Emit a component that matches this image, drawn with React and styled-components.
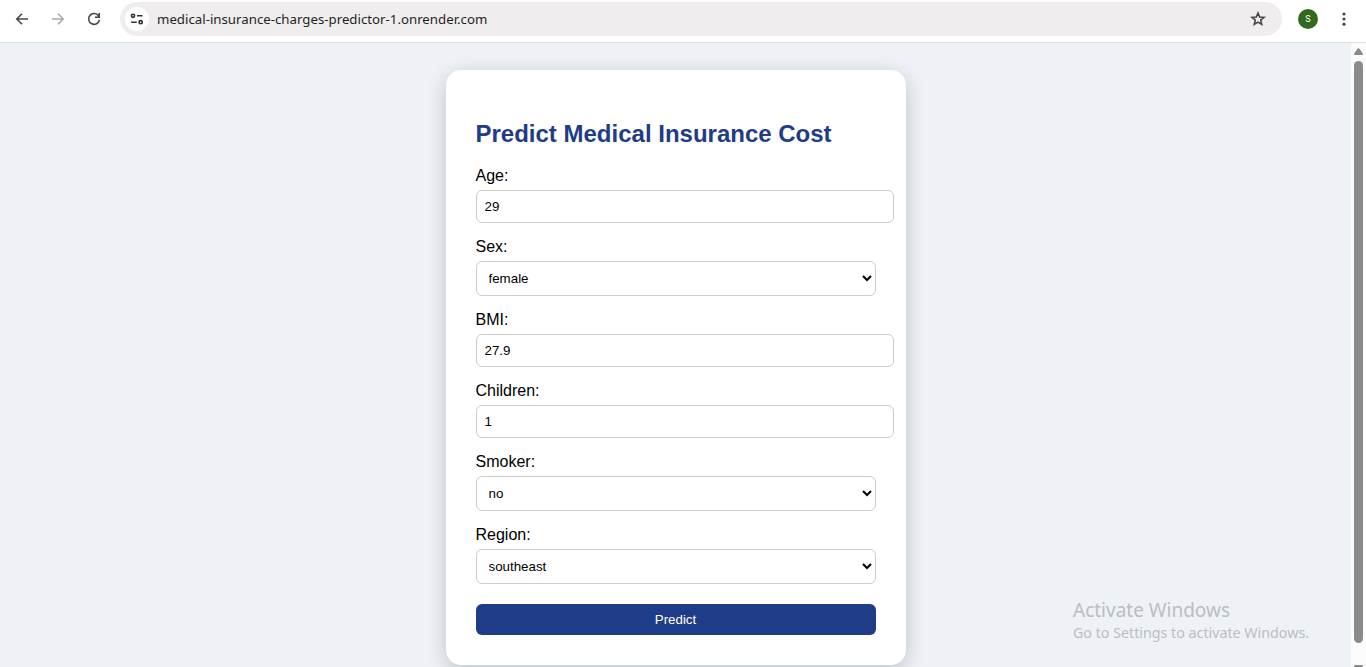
import React from 'react';
import styled, { createGlobalStyle } from 'styled-components';

const GlobalStyle = createGlobalStyle`
  body { margin: 0; background: #eef2f7; overflow: hidden; }
  *, *::before, *::after { box-sizing: border-box; }
`;

const Window = styled.div`
  position: relative;
  display: flex;
  flex-direction: column;
  width: 1366px;
  height: 667px;
  overflow: hidden;
  background: #fff;
  font-family: Arial, 'Liberation Sans', sans-serif;
`;

const Toolbar = styled.header`
  display: flex;
  flex: none;
  align-items: flex-start;
  height: 43px;
  padding: 2px 13px 0 13px;
  border-bottom: 1px solid #dedfe1;
  background: #fff;
`;

const NavButtons = styled.nav`
  display: flex;
  align-items: center;
  gap: 18px;
  width: 107px;
  height: 34px;
`;

const Icon = styled.svg`
  display: block;
  flex: none;
  width: 18px;
  height: 18px;
  fill: none;
  stroke: ${(p) => p.$color || '#474747'};
  stroke-width: 1.6;
`;

const AddressBar = styled.div`
  display: flex;
  align-items: center;
  width: 1162px;
  height: 34px;
  padding: 0 15px 0 5px;
  border-radius: 17px;
  background: #efedee;
`;

const SiteInfo = styled.span`
  display: flex;
  align-items: center;
  justify-content: center;
  width: 24px;
  height: 24px;
  border-radius: 50%;
  background: #fff;
`;

const Url = styled.span`
  flex: 1;
  margin-left: 8px;
  color: #1f1f1f;
  font: 13.26px/18px 'Noto Sans', 'Open Sans', sans-serif;
`;

const Avatar = styled.span`
  width: 20px;
  height: 20px;
  margin: 7px 17px 0 16px;
  border-radius: 50%;
  background: #33691e;
  color: #fff;
  font: 9px/20px Roboto, sans-serif;
  text-align: center;
`;

const MenuIcon = styled(Icon)`
  margin-top: 8px;
  fill: #474747;
  stroke: none;
`;

const Viewport = styled.div`
  display: flex;
  flex: 1;
  min-height: 0;
`;

const Page = styled.main`
  display: flex;
  flex: 1;
  align-items: flex-start;
  justify-content: center;
  padding-top: 27px;
  background: #eef2f7;
`;

const Card = styled.form`
  flex: none;
  width: 460px;
  height: 595px;
  padding: 50px 30px 30px;
  border-radius: 15px;
  background: #fff;
  box-shadow: 0 5px 20px rgba(0, 0, 0, 0.2);
`;

const Title = styled.h2`
  margin: 0 0 20px;
  color: #1e3c88;
  font-size: 24px;
  line-height: 27px;
  white-space: nowrap;
`;

const Field = styled.div`
  margin-bottom: 15px;
`;

const Label = styled.label`
  display: block;
  height: 18px;
  margin-bottom: 5px;
  color: #000;
  font-size: 16px;
  line-height: 18px;
`;

const Input = styled.input`
  display: block;
  width: 418px;
  height: 33px;
  padding: 8px;
  border: 1px solid #ccc;
  border-radius: 6px;
  background: #fff;
  color: #000;
  font: 13.333px Arial, 'Liberation Sans', sans-serif;
`;

const Select = styled.select`
  display: block;
  width: 400px;
  height: 35px;
  padding: 8px;
  border: 1px solid #ccc;
  border-radius: 6px;
  background: #fff;
  color: #000;
  font: 13.333px Arial, 'Liberation Sans', sans-serif;
`;

const Submit = styled.button`
  display: block;
  width: 400px;
  height: 31px;
  margin-top: 20px;
  padding: 0;
  border: 0;
  border-radius: 6px;
  background: #1e3c88;
  color: #fff;
  font: 13.333px Arial, 'Liberation Sans', sans-serif;
`;

const ScrollTrack = styled.div`
  display: flex;
  flex: none;
  flex-direction: column;
  align-items: center;
  width: 15px;
  padding-top: 5px;
  background: #fcfcfc;
`;

const ScrollArrow = styled.svg`
  display: block;
  flex: none;
  width: 9px;
  height: 7px;
  fill: #8b8b8b;
`;

const ScrollThumb = styled.div`
  flex: none;
  width: 9px;
  height: 582px;
  margin: 6px 0 22px;
  border-radius: 5px;
  background: #8b8b8b;
`;

const Watermark = styled.aside`
  position: absolute;
  left: 1073px;
  top: 598px;
  color: #bbbdc1;
  font-family: 'Noto Sans', 'Open Sans', sans-serif;
  white-space: nowrap;
`;

const WatermarkTitle = styled.div`
  font-size: 19px;
  line-height: 24px;
`;

const WatermarkText = styled.div`
  margin-top: 1px;
  font-size: 14.25px;
  line-height: 20px;
`;

const fields = [
  { id: 'age', label: 'Age:', value: '29' },
  { id: 'sex', label: 'Sex:', options: ['female', 'male'] },
  { id: 'bmi', label: 'BMI:', value: '27.9' },
  { id: 'children', label: 'Children:', value: '1' },
  { id: 'smoker', label: 'Smoker:', options: ['no', 'yes'] },
  { id: 'region', label: 'Region:', options: ['southeast', 'southwest', 'northeast', 'northwest'] },
];

function BrowserBar() {
  return (
    <Toolbar>
      <NavButtons>
        <Icon viewBox="0 0 18 18"><path d="M15 9H4M9 3.8 3.8 9 9 14.2" /></Icon>
        <Icon viewBox="0 0 18 18" $color="#ababab"><path d="M3 9h11M9 3.8 14.2 9 9 14.2" /></Icon>
        <Icon viewBox="0 0 18 18"><path d="M13.6 6A5.4 5.4 0 1 0 14.4 9.8M14.2 3v4.2H10" /></Icon>
      </NavButtons>
      <AddressBar>
        <SiteInfo>
          <Icon viewBox="0 0 18 18" $color="#303030">
            <circle cx="5" cy="5.8" r="1.6" />
            <path d="M9 5.8h5.5M3.2 12.2h5.5" />
            <circle cx="12.7" cy="12.2" r="1.6" />
          </Icon>
        </SiteInfo>
        <Url>medical-insurance-charges-predictor-1.onrender.com</Url>
        <Icon viewBox="0 0 18 18">
          <path d="m9 3 1.7 3.95 4.3.38-3.25 2.82.95 4.25L9 12.15 5.3 14.4l.95-4.25L3 7.33l4.3-.38z" />
        </Icon>
      </AddressBar>
      <Avatar>S</Avatar>
      <MenuIcon viewBox="0 0 18 18">
        <circle cx="9" cy="4" r="1.6" />
        <circle cx="9" cy="9" r="1.6" />
        <circle cx="9" cy="14.2" r="1.6" />
      </MenuIcon>
    </Toolbar>
  );
}

export default function App() {
  return (
    <Window>
      <GlobalStyle />
      <BrowserBar />
      <Viewport>
        <Page>
          <Card onSubmit={(e) => e.preventDefault()}>
            <Title>Predict Medical Insurance Cost</Title>
            {fields.map((f) => (
              <Field key={f.id}>
                <Label htmlFor={f.id}>{f.label}</Label>
                {f.options ? (
                  <Select id={f.id} defaultValue={f.options[0]}>
                    {f.options.map((o) => <option key={o}>{o}</option>)}
                  </Select>
                ) : (
                  <Input id={f.id} defaultValue={f.value} />
                )}
              </Field>
            ))}
            <Submit type="submit">Predict</Submit>
          </Card>
        </Page>
        <ScrollTrack>
          <ScrollArrow viewBox="0 0 9 7"><path d="M3.7.6Q4.5-.3 5.3.6L8.8 5.5Q9.2 7 8 7H1Q-.2 7 .2 5.5z" /></ScrollArrow>
          <ScrollThumb />
          <ScrollArrow viewBox="0 0 9 7"><path d="M3.7 6.4Q4.5 7.3 5.3 6.4L8.8 1.5Q9.2 0 8 0H1Q-.2 0 .2 1.5z" /></ScrollArrow>
        </ScrollTrack>
      </Viewport>
      <Watermark>
        <WatermarkTitle>Activate Windows</WatermarkTitle>
        <WatermarkText>Go to Settings to activate Windows.</WatermarkText>
      </Watermark>
    </Window>
  );
}
